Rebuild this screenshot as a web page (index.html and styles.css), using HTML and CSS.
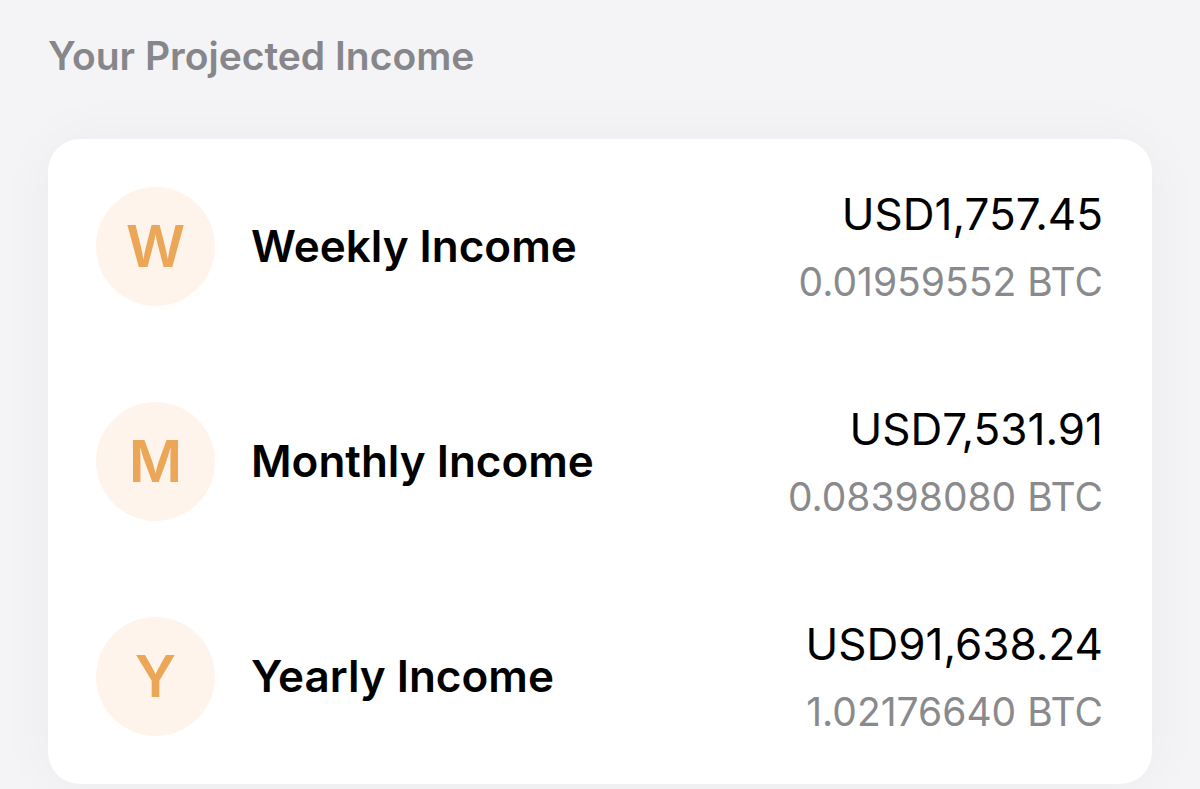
FILE: index.html
```html
<!DOCTYPE html>
<html lang="en">
<head>
    <meta charset="UTF-8">
    <meta name="viewport" content="width=device-width, initial-scale=1">
    <title>Your Projected Income</title>
    <link rel="stylesheet" href="styles.css">
</head>
<body>
    <main class="income">
        <h1 class="income_title">Your Projected Income</h1>

        <ul class="income_card">
            <li class="income_row">
                <span class="badge" aria-hidden="true">W</span>
                <h2 class="income_label">Weekly Income</h2>
                <div class="amounts">
                    <p class="usd">USD1,757.45</p>
                    <p class="btc">0.01959552 BTC</p>
                </div>
            </li>
            <li class="income_row">
                <span class="badge" aria-hidden="true">M</span>
                <h2 class="income_label">Monthly Income</h2>
                <div class="amounts">
                    <p class="usd">USD7,531.91</p>
                    <p class="btc">0.08398080 BTC</p>
                </div>
            </li>
            <li class="income_row">
                <span class="badge" aria-hidden="true">Y</span>
                <h2 class="income_label">Yearly Income</h2>
                <div class="amounts">
                    <p class="usd">USD91,638.24</p>
                    <p class="btc">1.02176640 BTC</p>
                </div>
            </li>
        </ul>
    </main>
</body>
</html>
```

FILE: styles.css
```css
* {
    box-sizing: border-box;
    margin: 0;
    padding: 0;
}

body {
    background: #f4f4f6;
    color: #000;
    font-family: Inter, "Liberation Sans", sans-serif;
}

.income {
    padding: 32px 48px 5px;
}

.income_title {
    margin-bottom: 59px;
    color: #86868b;
    font-size: 39px;
    font-weight: 600;
    line-height: 48px;
}

.income_card {
    display: flex;
    flex-direction: column;
    gap: 95px;
    padding: 47px 49px 48px 48px;
    border-radius: 32px;
    background: #fff;
    box-shadow: 0 0 60px rgba(0, 0, 0, 0.04);
    list-style: none;
}

.income_row {
    display: flex;
    align-items: center;
    min-height: 120px;
}

.badge {
    display: flex;
    flex: none;
    align-items: center;
    justify-content: center;
    width: 119px;
    height: 119px;
    margin-right: 36px;
    border-radius: 50%;
    background: #fef4eb;
    color: #eba657;
    font-size: 58px;
    font-weight: 600;
}

.income_label {
    flex: 1;
    font-size: 44px;
    font-weight: 600;
    line-height: 56px;
}

.amounts {
    text-align: right;
}

.usd {
    margin-bottom: 16px;
    font-size: 44px;
    line-height: 56px;
}

.btc {
    color: #8a8a8d;
    font-size: 39px;
    line-height: 48px;
}
```
